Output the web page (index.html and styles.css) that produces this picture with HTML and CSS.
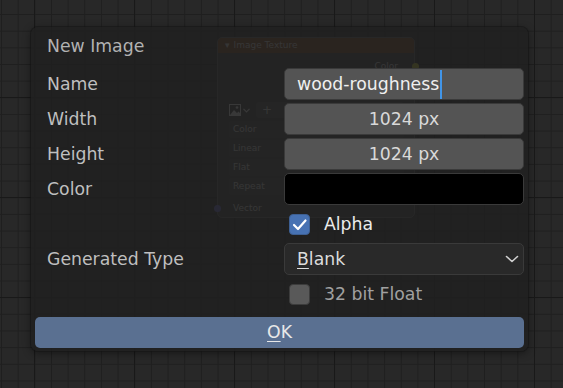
FILE: index.html
```html
<!DOCTYPE html>
<html lang="en">
<head>
    <meta charset="UTF-8">
    <meta name="viewport" content="width=device-width, initial-scale=1.0">
    <title>New Image</title>
    <link rel="stylesheet" href="styles.css">
</head>
<body>
    <!-- Node lying on the editor canvas, behind the popup -->
    <div class="node">
        <div class="node-header"><span class="node-arrow">▾</span>Image Texture</div>
        <div class="node-output">Color<span class="socket socket-color"></span></div>
        <div class="node-image">
            <svg class="node-icon" width="12" height="12" viewBox="0 0 12 12">
                <rect x="0.5" y="0.5" width="11" height="11" fill="none" stroke="#e0e0e0"/>
                <path d="M1 11 L5 6 L8 9 L9.5 7.5 L11 9 L11 11 Z" fill="#e0e0e0"/>
                <circle cx="8" cy="3.5" r="1.3" fill="#e0e0e0"/>
            </svg>
            <svg class="node-chevron" width="7" height="5" viewBox="0 0 7 5">
                <path d="M0.5 0.8 L3.5 3.8 L6.5 0.8" fill="none" stroke="#e0e0e0" stroke-width="1.2"/>
            </svg>
            <span class="node-add">+</span>
        </div>
        <div class="node-field">Color</div>
        <div class="node-field">Linear</div>
        <div class="node-field">Flat</div>
        <div class="node-field">Repeat</div>
        <div class="node-input"><span class="socket socket-vector"></span>Vector</div>
    </div>

    <!-- New Image popup -->
    <div class="dialog">
        <div class="dialog-title">New Image</div>

        <div class="label">Name</div>
        <div class="field field-text">wood-roughness<span class="caret"></span></div>

        <div class="label">Width</div>
        <div class="field field-num">1024 px</div>

        <div class="label">Height</div>
        <div class="field field-num">1024 px</div>

        <div class="label">Color</div>
        <div class="field field-color"></div>

        <div></div>
        <div class="check-row">
            <span class="checkbox checked">
                <svg width="21" height="21" viewBox="0 0 21 21">
                    <path d="M5 11 L9 15 L16.5 6.5" fill="none" stroke="#fff" stroke-width="2.2" stroke-linecap="round" stroke-linejoin="round"/>
                </svg>
            </span>
            <span class="check-label">Alpha</span>
        </div>

        <div class="label">Generated Type</div>
        <div class="field field-menu">
            <span><u>B</u>lank</span>
            <svg width="14" height="8" viewBox="0 0 14 8">
                <path d="M1.5 1.5 L7 6.5 L12.5 1.5" fill="none" stroke="#d0d0d0" stroke-width="1.6" stroke-linecap="round" stroke-linejoin="round"/>
            </svg>
        </div>

        <div></div>
        <div class="check-row">
            <span class="checkbox"></span>
            <span class="check-label dim">32 bit Float</span>
        </div>

        <div class="ok-button"><u>O</u>K</div>
    </div>
</body>
</html>
```

FILE: styles.css
```css
html, body {
    margin: 0;
    padding: 0;
}

body {
    width: 563px;
    height: 388px;
    overflow: hidden;
    position: relative;
    font-family: "DejaVu Sans", sans-serif;
    background-color: #282828;
    background-image:
        linear-gradient(to right, #191919 1px, transparent 1px),
        linear-gradient(to bottom, #191919 1px, transparent 1px),
        linear-gradient(to right, #1f1f1f 1px, transparent 1px),
        linear-gradient(to bottom, #1f1f1f 1px, transparent 1px);
    background-size: 100px 100px, 100px 100px, 16.667px 16.667px, 16.667px 16.667px;
    background-position: 34px 0, 0 97px, 1px 14px, 1px 14px;
}

/* ---------- node behind the popup ---------- */
.node {
    position: absolute;
    left: 217px;
    top: 37px;
    width: 198px;
    height: 181px;
    box-sizing: border-box;
    background-color: #3d3d3d;
    border: 1px solid #5a5a5a;
    border-radius: 5px;
    font-size: 9px;
    color: #cfcfcf;
    display: flex;
    flex-direction: column;
}

.node-header {
    height: 15px;
    line-height: 15px;
    padding-left: 7px;
    background-color: #74401c;
    border-radius: 4px 4px 0 0;
    display: flex;
    gap: 4px;
}

.node-output {
    position: relative;
    margin-top: 4px;
    height: 18px;
    line-height: 18px;
    text-align: right;
    padding-right: 16px;
}

.socket {
    position: absolute;
    width: 7px;
    height: 7px;
    border-radius: 50%;
    top: 50%;
    margin-top: -3.5px;
}

.socket-color {
    right: -4.5px;
    background-color: #c7c729;
}

.socket-vector {
    left: -4.5px;
    background-color: #6363c7;
}

.node-image {
    margin: 26px 10px 0 11px;
    height: 18px;
    display: flex;
    align-items: center;
    gap: 2px;
}

.node-add {
    flex: 1;
    margin-left: 4px;
    height: 16px;
    line-height: 16px;
    padding-left: 6px;
    font-size: 12px;
    background-color: #4a4a4a;
    border-radius: 3px;
}

.node-field {
    margin: 2px 10px 0 11px;
    height: 17px;
    line-height: 17px;
    padding-left: 4px;
    background-color: #464646;
    border-radius: 3px;
}

.node-field:first-of-type {
    margin-top: 1px;
}

.node-input {
    position: relative;
    margin-top: 4px;
    height: 18px;
    line-height: 18px;
    padding-left: 15px;
}

/* ---------- popup ---------- */
.dialog {
    position: absolute;
    left: 31px;
    top: 27px;
    width: 497px;
    box-sizing: border-box;
    padding: 4px 4px 3px;
    background-color: rgba(32, 32, 32, 0.88);
    border-radius: 7px;
    box-shadow: 0 0 0 1px rgba(22, 22, 22, 0.6), 0 2px 8px rgba(0, 0, 0, 0.45);
    display: grid;
    grid-template-columns: 249px 1fr;
    row-gap: 3px;
    font-size: 17.3px;
}

.dialog-title {
    grid-column: 1 / -1;
    height: 34px;
    line-height: 30px;
    padding-left: 12px;
    color: #b2b2b2;
}

.label {
    padding-left: 12px;
    line-height: 32px;
    color: #bfbfbf;
}

.field {
    height: 32px;
    box-sizing: border-box;
    border: 1px solid #3a3a3a;
    border-radius: 5px;
    background-color: #545454;
    color: #d9d9d9;
    display: flex;
    align-items: center;
}

.field-text {
    padding-left: 12px;
    color: #efefef;
}

.caret {
    width: 2px;
    height: 29px;
    margin-left: 1px;
    background-color: #4195e8;
}

.field-num {
    justify-content: center;
}

.field-color {
    background-color: #000;
}

.field-menu {
    background-color: #292929;
    justify-content: space-between;
    padding: 0 4px 0 12px;
    color: #dcdcdc;
}

u {
    text-decoration-thickness: 1px;
    text-underline-offset: 3px;
}

.check-row {
    height: 32px;
    display: flex;
    align-items: center;
    gap: 14px;
    padding-left: 5px;
}

.checkbox {
    width: 21px;
    height: 21px;
    box-sizing: border-box;
    border: 1px solid #3c3c3c;
    border-radius: 4px;
    background-color: #595959;
    display: flex;
}

.checkbox svg {
    margin: -1px;
}

.checkbox.checked {
    background-color: #4772b3;
    border-color: #3d5f92;
}

.check-label {
    color: #ebebeb;
}

.check-label.dim {
    color: #a0a0a0;
}

.ok-button {
    grid-column: 1 / -1;
    margin-top: 4px;
    height: 31px;
    line-height: 31px;
    border-radius: 5px;
    background-color: #5a7091;
    color: #e8e8e8;
    text-align: center;
}
```
